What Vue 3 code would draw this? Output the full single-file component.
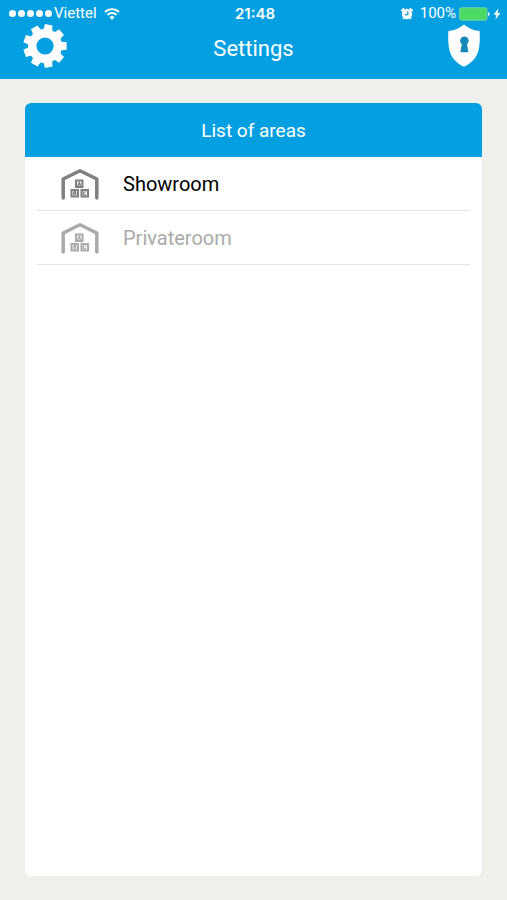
<script setup>
const areas = [
  { name: 'Showroom', muted: false },
  { name: 'Privateroom', muted: true },
]
const gearTeeth = Array.from({ length: 9 }, (_, i) => i * 40)
</script>

<template>
  <div class="screen">
    <header class="header">
      <div class="status">
        <div class="status-left">
          <span class="signal"><i v-for="n in 5" :key="n" class="dot"></i></span>
          <span>Viettel</span>
          <svg class="wifi" width="16" height="12" viewBox="0 0 16 12" fill="none" stroke="#fff" stroke-width="1.8" aria-hidden="true">
            <path d="M1 4a10 10 0 0 1 14 0" />
            <path d="M3.5 6.9a6.3 6.3 0 0 1 9 0" />
            <path d="M8 11.8 5.5 9.2a3.6 3.6 0 0 1 5 0z" fill="#fff" stroke="none" />
          </svg>
        </div>
        <time class="clock">21:48</time>
        <div class="status-right">
          <svg width="14" height="14" viewBox="0 0 14 14" aria-hidden="true">
            <circle cx="7" cy="7" r="5.2" fill="#fff" />
            <path d="M1.8 3.4 3.6 1.8M12.2 3.4 10.4 1.8" stroke="#fff" stroke-width="1.8" stroke-linecap="round" />
            <path d="M3.6 11 2.8 12.2M10.4 11l.8 1.2" stroke="#fff" stroke-width="1.3" />
            <path d="M7.8 4.2v3.4H5" fill="none" stroke="#049fe1" stroke-width="1.2" />
          </svg>
          <span class="percent">100%</span>
          <svg width="31" height="14" viewBox="0 0 31 14" aria-hidden="true">
            <rect x="0.5" y="0.8" width="27.5" height="12.4" rx="2" fill="#4cd964" stroke="#6fd2b0" />
            <path d="M29 5v4q1.6-.6 1.6-2T29 5z" fill="#fff" />
          </svg>
          <svg width="8" height="12" viewBox="0 0 8 12" aria-hidden="true">
            <path d="M5.4 .2.6 6.8h2.8l-1 5L7.4 5H4.6z" fill="#fff" />
          </svg>
        </div>
      </div>
      <nav class="nav">
        <button class="icon-button" type="button" aria-label="Settings">
          <svg width="44" height="44" viewBox="-22 -22 44 44" fill="#fff">
            <circle r="12.8" fill="none" stroke="#fff" stroke-width="8.4" />
            <path v-for="a in gearTeeth" :key="a" d="M14-4.6 21.6-3.8V3.8L14 4.6z" :transform="`rotate(${a})`" />
          </svg>
        </button>
        <h1 class="title">Settings</h1>
        <button class="icon-button end" type="button" aria-label="Security">
          <svg width="44" height="44" viewBox="-7 0 44 44">
            <path d="M17 .4c3.6 3.4 8.800 5.800 15.600 6.600.4 7 .4 14-1.400 20.600C29 34.600 24 39.600 17 42.800 10 39.600 5 34.600 2.800 27.600 1 21 1 14 1.400 7 8.200 6.200 13.400 3.800 17 .4z" fill="#fff" />
            <path d="M17.400 12.600a4.200 4.200 0 0 1 2.600 7.500l1.400 8.100h-8l1.400-8.100a4.200 4.200 0 0 1 2.600-7.500z" fill="#1787b8" />
          </svg>
        </button>
      </nav>
    </header>

    <main class="content">
      <section class="card">
        <h2 class="card-title">List of areas</h2>
        <ul class="areas">
          <li v-for="area in areas" :key="area.name" class="area">
            <button class="area-button" :class="{ muted: area.muted }" type="button">
              <svg class="house" width="38" height="32" viewBox="0 0 38 32" fill="none" stroke="currentColor" aria-hidden="true">
                <path d="M2.2 30V11L19 2.8 35.8 11V30" stroke-width="3.5" stroke-linejoin="round" stroke-linecap="round" />
                <g stroke-width="2">
                  <rect x="15" y="12.5" width="6.500" height="6.500" />
                  <rect x="10.500" y="22" width="6.500" height="6.500" />
                  <rect x="20.500" y="22" width="6.500" height="6.500" />
                </g>
                <g stroke-width="1.200">
                  <path d="M16.700 18l1.600-4 1.600 4M17.200 16.800h2.200" />
                  <path d="M12.800 23.400v3.600h2v-1.800h-2M12.800 23.600h1.700v1.600" />
                  <path d="M25.200 24h-2.800v2.800h2.800" />
                </g>
              </svg>
              <span>{{ area.name }}</span>
            </button>
          </li>
        </ul>
      </section>
    </main>
  </div>
</template>

<style>
body {
  margin: 0;
  background: #efefeb;
}
</style>

<style scoped>
.screen {
  display: flex;
  flex-direction: column;
  min-height: 100vh;
  background: #efefeb;
  font-family: Roboto, "Liberation Sans", sans-serif;
}

.header {
  background: #049fe1;
  color: #fff;
}

.status,
.nav {
  display: grid;
  grid-template-columns: 1fr auto 1fr;
}

.status {
  align-items: center;
  height: 21px;
  padding: 3px 6px 0 9px;
  font-size: 15px;
  line-height: 21px;
}

.status-left,
.status-right {
  display: flex;
  align-items: center;
}

.status-right {
  justify-content: flex-end;
  gap: 3px;
}

.signal {
  display: flex;
  gap: 2px;
  margin-right: 2px;
}

.dot {
  width: 7px;
  height: 7px;
  border-radius: 50%;
  background: #fff;
}

.wifi {
  margin-left: 7px;
}

.clock {
  font-family: Inter, Roboto, sans-serif;
  font-weight: 600;
}

.percent {
  margin-left: 3px;
}

.nav {
  padding: 0 23px 11px;
}

.icon-button {
  display: flex;
  justify-self: start;
  align-self: start;
  padding: 0;
  border: 0;
  background: none;
  cursor: pointer;
}

.icon-button.end {
  justify-self: end;
}

.title {
  margin: 0;
  height: 44px;
  font-size: 22px;
  font-weight: 400;
  line-height: 50px;
}

.content {
  display: flex;
  flex: 1;
  padding: 24px 25px;
}

.card {
  flex: 1;
  overflow: hidden;
  border-radius: 6px;
  background: #fff;
}

.card-title {
  height: 54px;
  margin: 0;
  background: #049fe1;
  color: #fff;
  font-size: 19px;
  font-weight: 400;
  line-height: 56px;
  text-align: center;
}

.areas {
  margin: 0;
  padding: 0 12px;
  list-style: none;
}

.area {
  border-bottom: 1px solid #e4e4e4;
}

.area-button {
  display: flex;
  align-items: center;
  gap: 24px;
  width: 100%;
  height: 53px;
  padding: 0 24px;
  border: 0;
  background: none;
  color: #000;
  font: inherit;
  font-size: 20px;
  text-align: left;
  cursor: pointer;
}

.house {
  color: #808080;
}

.muted,
.muted .house {
  color: #aaa;
}
</style>
